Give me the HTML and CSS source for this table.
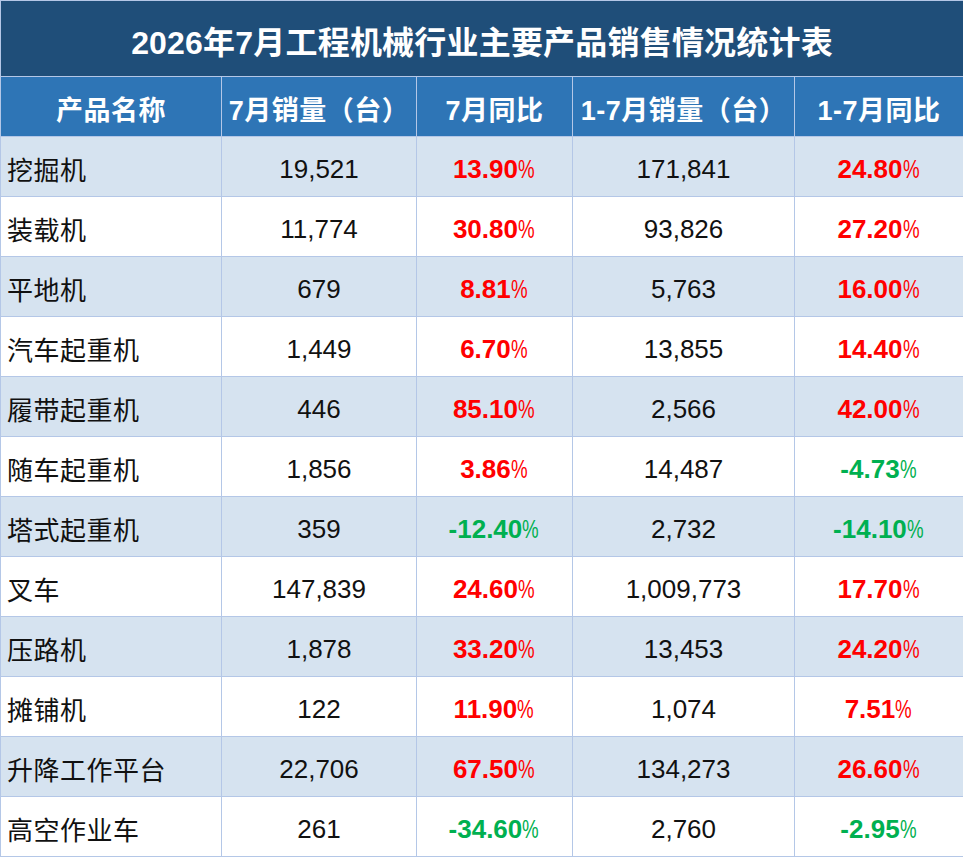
FILE: index.html
```html
<!DOCTYPE html>
<html lang="zh-CN">
<head>
<meta charset="utf-8">
<title>2026年7月工程机械行业主要产品销售情况统计表</title>
<link rel="stylesheet" href="styles.css">
</head>
<body>
<table class="sheet">
  <colgroup>
    <col class="c1"><col class="c2"><col class="c3"><col class="c4"><col class="c5">
  </colgroup>
  <thead>
    <tr class="title-row"><th colspan="5">2026年7月工程机械行业主要产品销售情况统计表</th></tr>
    <tr class="head-row">
      <th>产品名称</th><th>7月销量（台）</th><th>7月同比</th><th>1-7月销量（台）</th><th>1-7月同比</th>
    </tr>
  </thead>
  <tbody>
    <tr class="band"><td class="name">挖掘机</td><td>19,521</td><td class="up">13.90<span class="pc">%</span></td><td>171,841</td><td class="up">24.80<span class="pc">%</span></td></tr>
    <tr><td class="name">装载机</td><td>11,774</td><td class="up">30.80<span class="pc">%</span></td><td>93,826</td><td class="up">27.20<span class="pc">%</span></td></tr>
    <tr class="band"><td class="name">平地机</td><td>679</td><td class="up">8.81<span class="pc">%</span></td><td>5,763</td><td class="up">16.00<span class="pc">%</span></td></tr>
    <tr><td class="name">汽车起重机</td><td>1,449</td><td class="up">6.70<span class="pc">%</span></td><td>13,855</td><td class="up">14.40<span class="pc">%</span></td></tr>
    <tr class="band"><td class="name">履带起重机</td><td>446</td><td class="up">85.10<span class="pc">%</span></td><td>2,566</td><td class="up">42.00<span class="pc">%</span></td></tr>
    <tr><td class="name">随车起重机</td><td>1,856</td><td class="up">3.86<span class="pc">%</span></td><td>14,487</td><td class="down">-4.73<span class="pc">%</span></td></tr>
    <tr class="band"><td class="name">塔式起重机</td><td>359</td><td class="down">-12.40<span class="pc">%</span></td><td>2,732</td><td class="down">-14.10<span class="pc">%</span></td></tr>
    <tr><td class="name">叉车</td><td>147,839</td><td class="up">24.60<span class="pc">%</span></td><td>1,009,773</td><td class="up">17.70<span class="pc">%</span></td></tr>
    <tr class="band"><td class="name">压路机</td><td>1,878</td><td class="up">33.20<span class="pc">%</span></td><td>13,453</td><td class="up">24.20<span class="pc">%</span></td></tr>
    <tr><td class="name">摊铺机</td><td>122</td><td class="up">11.90<span class="pc">%</span></td><td>1,074</td><td class="up">7.51<span class="pc">%</span></td></tr>
    <tr class="band"><td class="name">升降工作平台</td><td>22,706</td><td class="up">67.50<span class="pc">%</span></td><td>134,273</td><td class="up">26.60<span class="pc">%</span></td></tr>
    <tr><td class="name">高空作业车</td><td>261</td><td class="down">-34.60<span class="pc">%</span></td><td>2,760</td><td class="down">-2.95<span class="pc">%</span></td></tr>
  </tbody>
</table>
</body>
</html>
```

FILE: styles.css
```css
html, body {
  margin: 0;
  padding: 0;
  background: #ffffff;
}

.sheet {
  width: 963px;
  border-collapse: collapse;
  table-layout: fixed;
  font-family: "Liberation Sans", "Noto Sans CJK SC", sans-serif;
  color: #111111;
}

.c1 { width: 221px; }
.c2 { width: 195px; }
.c3 { width: 156px; }
.c4 { width: 222px; }
.c5 { width: 169px; }

.sheet th,
.sheet td {
  border: 1px solid #b4c7e7;
  padding: 0;
  text-align: center;
  vertical-align: middle;
  white-space: nowrap;
  box-sizing: border-box;
}

.title-row th {
  height: 76px;
  padding-top: 3px;
  background: #1f4e79;
  color: #ffffff;
  font-size: 32px;
  font-weight: bold;
  letter-spacing: 0.2px;
}

.head-row th {
  height: 60px;
  padding-top: 3px;
  background: #2e75b6;
  color: #ffffff;
  font-size: 27px;
  font-weight: bold;
  letter-spacing: 0.5px;
}

.sheet td {
  height: 60px;
  padding-top: 5px;
  font-size: 26px;
}

.sheet tr.band td {
  background: #d6e3f0;
}

.sheet td.name {
  text-align: left;
  padding-left: 6px;
  padding-top: 4px;
  font-family: "Noto Sans CJK SC", sans-serif;
  font-size: 26px;
  letter-spacing: 0.5px;
  color: #111111;
}

.sheet td.up,
.sheet td.down {
  font-weight: bold;
}

.sheet td.up { color: #ff0000; }
.sheet td.down { color: #00b050; }

.pc {
  display: inline-block;
  font-weight: normal;
  transform: scaleX(0.72);
  transform-origin: left center;
  margin-right: -5px;
}
```
